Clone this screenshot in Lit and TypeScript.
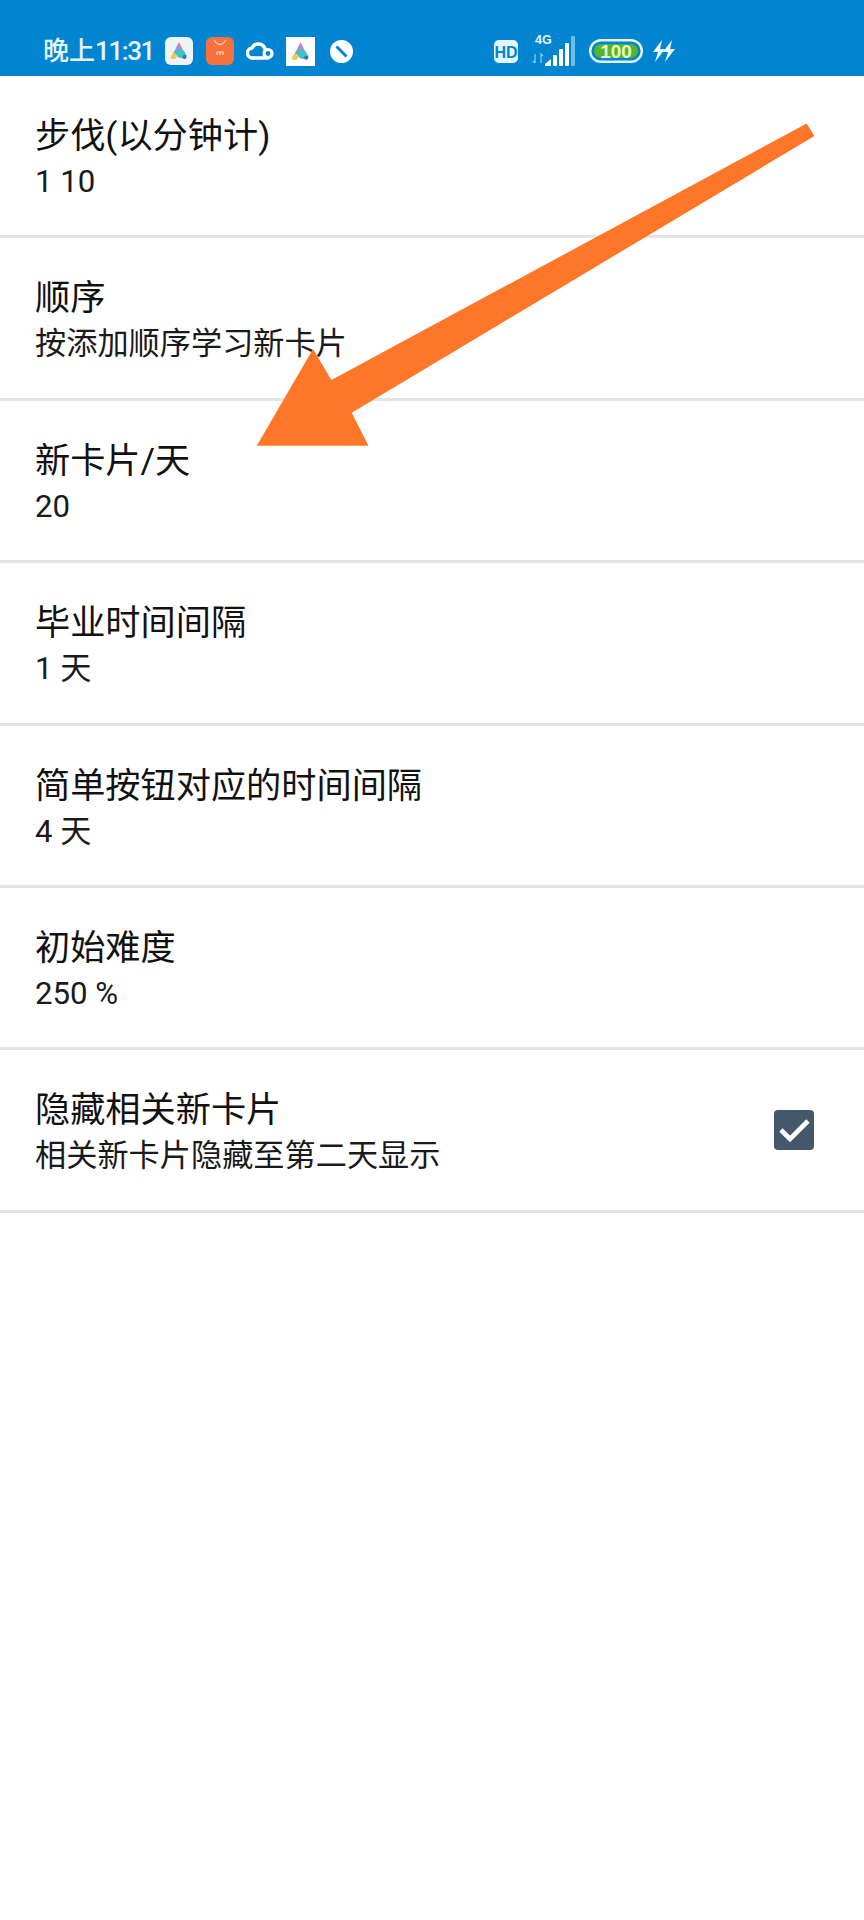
import { LitElement, html, css, svg } from "lit";
import { customElement } from "lit/decorators.js";

const rows = [
  { t: "步伐(以分钟计)", s: "1 10" },
  { t: "顺序", s: "按添加顺序学习新卡片" },
  { t: "新卡片/天", s: "20" },
  { t: "毕业时间间隔", s: "1 天" },
  { t: "简单按钮对应的时间间隔", s: "4 天" },
  { t: "初始难度", s: "250 %" },
  { t: "隐藏相关新卡片", s: "相关新卡片隐藏至第二天显示", check: true },
];

const logo = svg`
  <path d="M14 5 L20 17 H8 Z" fill="#c77fc9"/>
  <path d="M9 15 Q14 9 19 14 L22 19 Q18 23 13 20 Z" fill="#3cc4c4"/>
  <path d="M5.5 21 Q7 16 10 16 L12 20 Q9 24 5.5 21 Z" fill="#f2c94c"/>
  <circle cx="19.5" cy="20" r="2" fill="#3d6fb0"/>`;

@customElement("app-root")
export class AppRoot extends LitElement {
  static styles = css`
    :host {
      display: block;
      position: relative;
      width: 864px;
      height: 1920px;
      background: #fff;
      overflow: hidden;
      font-family: "Roboto", "Noto Sans CJK SC", sans-serif;
      color: #111;
    }
    .status {
      height: 76px;
      background: #0285d0;
      box-sizing: border-box;
      padding: 26px 0 0 43px;
      display: flex;
      align-items: center;
      color: #e4f4fb;
    }
    .status svg { display: block; flex: none; }
    .time {
      font-size: 26px;
      line-height: 30px;
      width: 122px;
      flex: none;
      white-space: nowrap;
      font-weight: 500;
    }
    .digits { letter-spacing: -1.4px; }
    .left { display: flex; align-items: center; gap: 12px; width: 329px; flex: none; }
    .right { display: flex; align-items: center; gap: 9px; }
    .net { margin: 0 3px 0 4px; }
    .row {
      box-sizing: border-box;
      height: 162.4px;
      border-bottom: 3px solid #e4e4e4;
      padding: 38px 50px 0 35px;
      display: flex;
      justify-content: space-between;
    }
    .title { font-size: 35.2px; line-height: 45px; }
    .sub { font-size: 31.2px; line-height: 45px; color: #1a1a1a; }
    .check { margin-top: 22px; display: block; }
    .arrow { position: absolute; left: 0; top: 0; pointer-events: none; }
  `;

  render() {
    return html`
      <div class="status">
        <span class="time">晚上<span class="digits">11:31</span></span>
        <div class="left">
          <svg width="28" height="28" viewBox="0 0 28 28"><rect width="28" height="28" rx="6" fill="#eef3f5"/>${logo}</svg>
          <svg width="28" height="28" viewBox="0 0 28 28" style="margin-left:1px">
            <rect width="28" height="28" rx="6" fill="#f7723d"/>
            <path d="M8 3 Q14 12 20 3" fill="none" stroke="#ffd9c4" stroke-width="1.3"/>
            <path d="M11 18 v-3 h6 v3 M14 15 v3" fill="none" stroke="#ffd9c4" stroke-width="1.2"/>
          </svg>
          <svg width="28" height="20" viewBox="0 0 28 20">
            <path d="M7 17 a5 5 0 0 1 -1 -10 a7 7 0 0 1 13 1" fill="none" stroke="#fff" stroke-width="3.4" stroke-linecap="round"/>
            <path d="M7 17 H22" stroke="#fff" stroke-width="3.4" stroke-linecap="round"/>
            <circle cx="22" cy="12.5" r="4" fill="none" stroke="#fff" stroke-width="3.2"/>
          </svg>
          <svg width="29" height="29" viewBox="0 0 28 28"><rect width="28" height="28" fill="#fff"/>${logo}</svg>
          <svg width="23" height="23" viewBox="0 0 23 23" style="margin-left:3px">
            <circle cx="11.5" cy="11.5" r="11.5" fill="#fff"/>
            <path d="M6.5 6.5 L16.5 16.5" stroke="#0285d0" stroke-width="3"/>
          </svg>
        </div>
        <div class="right">
          <svg width="24" height="23" viewBox="0 0 24 23">
            <rect width="24" height="23" rx="5" fill="#e4f4fb"/>
            <text x="12" y="17.5" text-anchor="middle" font-size="16" font-weight="700" fill="#0285d0" font-family="Liberation Sans">HD</text>
          </svg>
          <svg class="net" width="46" height="34" viewBox="0 0 46 34">
            <text x="0" y="10" font-size="12.5" font-weight="700" fill="#e4f4fb" font-family="Liberation Sans" dx="4">4G</text>
            <path d="M4 20 v9 M2 27 l2 2 M10 29 v-9 l2 2" stroke="#8fd0ee" stroke-width="1.2" fill="none"/>
            <path d="M14 30 L20 25 V32 H14 Z" fill="#fff"/>
            <rect x="22" y="21" width="4" height="11" rx="1" fill="#fff"/>
            <rect x="28" y="15" width="4" height="17" rx="1" fill="#fff"/>
            <rect x="34" y="9" width="4" height="23" rx="1" fill="#fff"/>
            <rect x="40" y="2" width="4" height="30" rx="1" fill="#6fbde6"/>
          </svg>
          <svg width="54" height="24" viewBox="0 0 54 24">
            <rect x="1.2" y="1.2" width="51.6" height="21.6" rx="10.8" fill="none" stroke="#e4f4fb" stroke-width="2.4"/>
            <rect x="5" y="5" width="38" height="14" rx="7" fill="#52b82a"/>
            <rect x="35" y="5" width="14" height="14" rx="7" fill="#52b82a"/>
            <text x="27" y="18.5" text-anchor="middle" font-size="19" font-weight="700" fill="#e9f7c8" font-family="Liberation Sans">100</text>
          </svg>
          <svg width="23" height="22" viewBox="0 0 23 22">
            <path d="M10 0 L1 12 H6 L3 22 L13 9 H8 Z M20 0 L11 12 H16 L13 22 L23 9 H18 Z" fill="#f2fafd"/>
          </svg>
        </div>
      </div>
      ${rows.map(
        (r) => html`
          <div class="row">
            <div>
              <div class="title">${r.t}</div>
              <div class="sub">${r.s}</div>
            </div>
            ${r.check
              ? html`<svg class="check" width="40" height="40" viewBox="0 0 40 40">
                  <rect width="40" height="40" rx="4" fill="#43586a"/>
                  <path d="M7 20 L16 29 L34 11" fill="none" stroke="#fff" stroke-width="4.6"/>
                </svg>`
              : ""}
          </div>
        `
      )}
      <svg class="arrow" width="864" height="1920" viewBox="0 0 864 1920">
        <path d="M806.7 123.5 L814.4 136 L351.7 412.7 L368.5 445.7 H256.8 L313 349 L331.4 380 Z" fill="#fe7627"/>
      </svg>
    `;
  }
}
